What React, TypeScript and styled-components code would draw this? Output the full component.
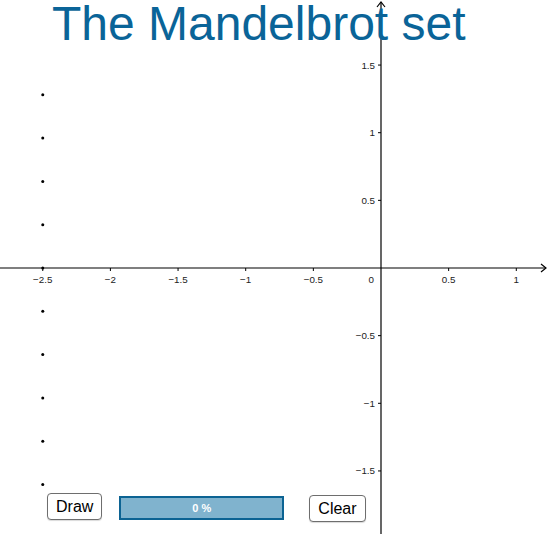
import React from 'react';
import styled, { createGlobalStyle } from 'styled-components';

const GlobalStyle = createGlobalStyle`
  html, body {
    margin: 0;
    padding: 0;
    background: #ffffff;
  }
  body {
    font-family: "Liberation Sans", Arial, sans-serif;
  }
`;

// graph coordinates
const W = 549;
const H = 534;
const OX = 381;
const OY = 268;
const SCALE = 135.3;

const px = (x: number) => OX + x * SCALE;
const py = (y: number) => OY - y * SCALE;

const xTicks = [-2.5, -2, -1.5, -1, -0.5, 0.5, 1];
const yTicks = [-1.5, -1, -0.5, 0.5, 1, 1.5];
const dots = [1.28, 0.96, 0.64, 0.32, 0, -0.32, -0.64, -0.96, -1.28, -1.6];

const fmt = (v: number) => (v < 0 ? '\u2212' + String(-v) : String(v));

const Applet = styled.div`
  position: relative;
  width: ${W}px;
  height: ${H}px;
  overflow: hidden;
  background: #ffffff;
`;

const Graph = styled.svg`
  display: block;
  width: ${W}px;
  height: ${H}px;
`;

const AxisLabel = styled.text`
  font-family: "Liberation Sans", Arial, sans-serif;
  font-size: 9.8px;
  fill: #222222;
`;

const Title = styled.h1`
  position: absolute;
  top: 0;
  left: 52px;
  margin: 0;
  font-family: "Liberation Sans", Arial, sans-serif;
  font-size: 48px;
  line-height: 1;
  font-weight: 400;
  color: #0a6498;
  white-space: nowrap;
`;

const Controls = styled.div`
  position: absolute;
  left: 47px;
  top: 493px;
  display: flex;
  align-items: flex-start;
`;

const Button = styled.button<{ $offset?: number; $gap?: number }>`
  box-sizing: border-box;
  height: 27px;
  margin-top: ${(p) => p.$offset ?? 0}px;
  margin-left: ${(p) => p.$gap ?? 0}px;
  padding: 0 8px;
  border: 1px solid #6e6e6e;
  border-radius: 4px;
  background: #ffffff;
  font-family: "Liberation Sans", Arial, sans-serif;
  font-size: 16px;
  color: #000000;
  box-shadow: 0 1px 1px rgba(0, 0, 0, 0.15);
`;

const Progress = styled.div`
  box-sizing: border-box;
  width: 165px;
  height: 24px;
  margin-top: 3px;
  margin-left: 17px;
  border: 2px solid #0c6393;
  background: #80b3ce;
  display: flex;
  align-items: center;
  justify-content: center;
  font-family: "Liberation Sans", Arial, sans-serif;
  font-size: 11px;
  font-weight: 700;
  color: #ffffff;
`;

function App() {
  return (
    <>
      <GlobalStyle />
      <Applet>
        <Graph viewBox={`0 0 ${W} ${H}`}>
          <g stroke="#000" strokeWidth={1.2} fill="none">
            <line x1={0} y1={OY} x2={W - 3} y2={OY} />
            <polyline points={`${W - 8},${OY - 4} ${W - 3},${OY} ${W - 8},${OY + 4}`} />
            <line x1={OX} y1={2} x2={OX} y2={H} />
            <polyline points={`${OX - 4},${7} ${OX},${2} ${OX + 4},${7}`} />
          </g>
          <g stroke="#000" strokeWidth={1}>
            {xTicks.map((t) => (
              <line key={'xt' + t} x1={px(t)} y1={OY} x2={px(t)} y2={OY + 3} />
            ))}
            {yTicks.map((t) => (
              <line key={'yt' + t} x1={OX - 3} y1={py(t)} x2={OX} y2={py(t)} />
            ))}
          </g>
          {xTicks.map((t) => (
            <AxisLabel key={'xl' + t} x={px(t)} y={OY + 15} textAnchor="middle">
              {fmt(t)}
            </AxisLabel>
          ))}
          <AxisLabel x={OX - 7} y={OY + 15} textAnchor="end">
            0
          </AxisLabel>
          {yTicks.map((t) => (
            <AxisLabel key={'yl' + t} x={OX - 6} y={py(t) + 3.5} textAnchor="end">
              {fmt(t)}
            </AxisLabel>
          ))}
          {dots.map((d) => (
            <circle key={'d' + d} cx={px(-2.5)} cy={py(d)} r={1.5} fill="#000" />
          ))}
        </Graph>
        <Title>The Mandelbrot set</Title>
        <Controls>
          <Button>Draw</Button>
          <Progress>0 %</Progress>
          <Button $offset={2} $gap={25}>Clear</Button>
        </Controls>
      </Applet>
    </>
  );
}

export default App;
